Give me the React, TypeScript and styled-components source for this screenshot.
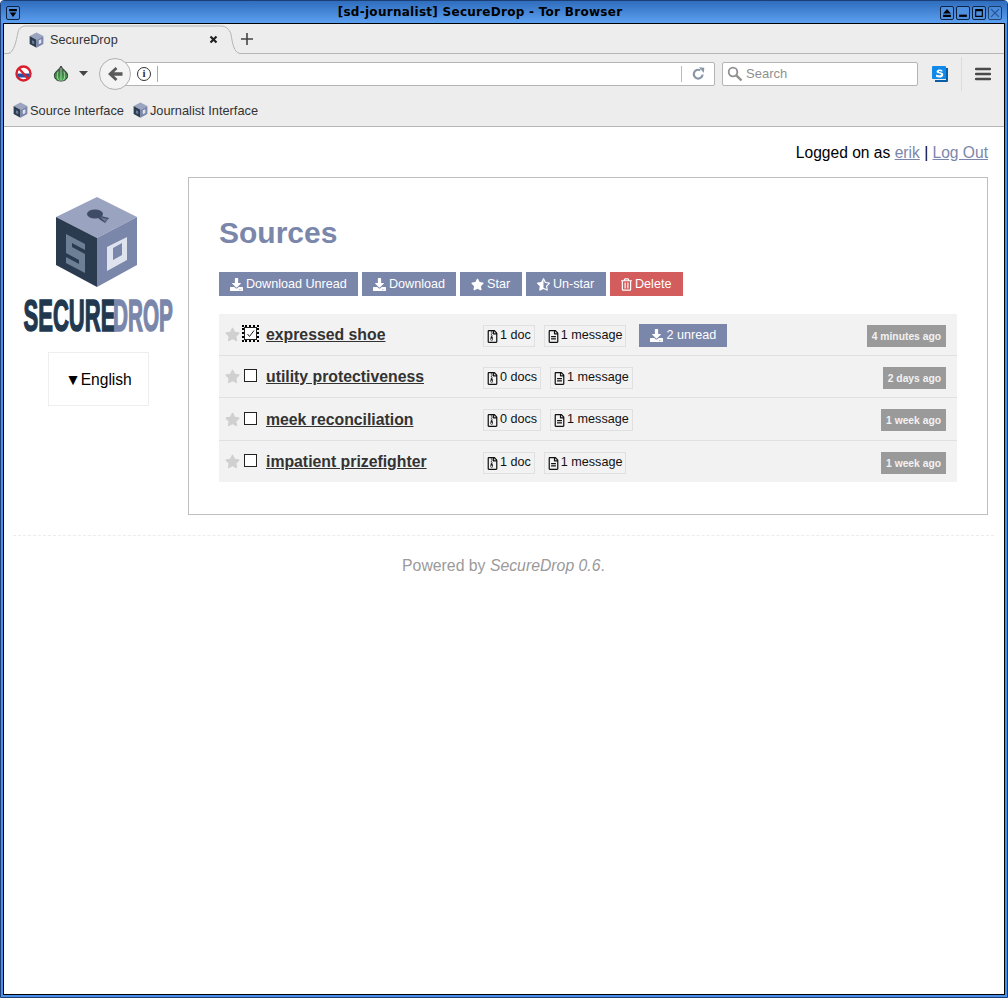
import React from "react";
import styled, { createGlobalStyle } from "styled-components";
import { FaDownload, FaStar, FaRegTrashAlt, FaRegFileArchive, FaRegFileAlt, FaStarHalfAlt } from "react-icons/fa";

const Global = createGlobalStyle`
  html, body { margin: 0; padding: 0; background: #fff; }
  body { font-family: "Liberation Sans", Arial, sans-serif; font-size: 16px; overflow: hidden; }
  * { box-sizing: border-box; }
`;

const Frame = styled.div`
  width: 1008px; height: 998px; display: flex; flex-direction: column;
  background: #4a8fe8; border: 1px solid #1d3f78; border-radius: 4px 4px 0 0; padding: 0 2px 2px;
`;
const TitleBar = styled.div`
  height: 22px; flex: none; display: flex; align-items: flex-start; justify-content: space-between;
  position: relative; padding: 5px 5px 0;
  background: linear-gradient(#2f6dbd, #5c9ff0); margin: 0 -2px;
`;
const TitleText = styled.div`
  position: absolute; left: 0; right: 48px; top: 4px; text-align: center;
  font-family: "DejaVu Sans", sans-serif; font-weight: 700; font-size: 12px; line-height: 14px; letter-spacing: 0.28px; color: #000;
`;
const WinButtons = styled.div`display: flex; gap: 2px;`;
const WinBtn = styled.div<{ $faded?: boolean }>`
  width: 14px; height: 14px; border: 1px solid #10233f; border-radius: 2px; background: #4f8fe0;
  display: flex; align-items: center; justify-content: center; opacity: ${p => (p.$faded ? 0.7 : 1)};
  svg { display: block; }
`;
const Window = styled.div`
  flex: 1; min-height: 0; display: flex; flex-direction: column; border: 1px solid #000; background: #fff;
`;
const TabRow = styled.div`
  height: 30px; flex: none; background: #ededed; border-bottom: 1px solid #b5b5b5; display: flex; align-items: center; position: relative;
`;
const TabShape = styled.svg`position: absolute; left: 0; top: 0; display: block;`;
const Tab = styled.div`
  width: 222px; height: 29px; display: flex; align-items: center; padding: 2px 8px 0 25px; font-size: 12.7px; color: #333; position: relative;
  svg { display: block; flex: none; }
`;
const TabTitle = styled.span`flex: 1; margin: 0 0 0 6px;`;
const NewTab = styled.div`margin: 1px 0 0 14px; display: flex; position: relative; svg { display: block; }`;
const NavRow = styled.div`
  height: 39px; flex: none; background: #ededed; display: flex; align-items: center; padding-left: 11px; position: relative;
`;
const IconSlot = styled.div<{ $w: number; $ml?: number }>`
  width: ${p => p.$w}px; margin-left: ${p => p.$ml ?? 0}px; flex: none; display: flex; align-items: center; svg { display: block; }
`;
const BackBtn = styled.div`
  width: 32px; height: 32px; flex: none; border-radius: 50%; border: 1px solid #b0b0b0; background: #f3f3f3;
  display: flex; align-items: center; justify-content: center; z-index: 1; margin-right: -16px;
`;
const UrlBar = styled.div`
  width: 600px; height: 24px; flex: none; background: #fff; border: 1px solid #b4b4b4; border-radius: 0 2px 2px 0;
  display: flex; align-items: center; padding-left: 21px;
`;
const InfoIcon = styled.div`
  width: 14px; height: 14px; border: 1px solid #333; border-radius: 50%; font-family: "Liberation Serif", serif; font-size: 11px; font-weight: 700;
  color: #333; display: flex; align-items: center; justify-content: center; line-height: 1;
`;
const Caret = styled.div`width: 1px; height: 16px; background: #aaa; margin-left: 6px; flex: none;`;
const UrlSpacer = styled.div`flex: 1;`;
const ReloadWrap = styled.div`
  width: 33px; height: 16px; border-left: 1px solid #bbb; display: flex; align-items: center; justify-content: center; svg { display: block; }
`;
const SearchBar = styled.div`
  width: 196px; height: 24px; flex: none; margin-left: 7px; background: #fff; border: 1px solid #b4b4b4; border-radius: 2px;
  display: flex; align-items: center; padding-left: 4px; gap: 3px; color: #8f8f8f; font-size: 13px;
  svg { display: block; }
`;
const ToolSep = styled.div`width: 1px; height: 34px; background: #dcdcdc; flex: none; margin: 0 13px;`;
const BookmarkRow = styled.div`
  height: 34px; flex: none; background: #ededed; border-bottom: 1px solid #b5b5b5; display: flex; align-items: center; padding: 1px 0 0 9px; gap: 9px; font-size: 12.8px; color: #333;
`;
const Bookmark = styled.div`display: flex; align-items: center; gap: 2px; svg { display: block; }`;

const Page = styled.div`flex: 1; min-height: 0; padding: 16px 16px 0 0; color: #000; line-height: 19px;`;
const UserLine = styled.div`text-align: right; height: 19px; margin-bottom: 15px; font-size: 15.6px;`;
const UserLink = styled.a`color: #7b86ab; text-decoration: underline;`;
const Columns = styled.div`display: flex; align-items: flex-start;`;
const Sidebar = styled.div`
  width: 184px; flex: none; padding: 20px 15px 0 19px; display: flex; flex-direction: column; align-items: center;
`;
const Logo = styled.svg`display: block; flex: none;`;
const LocaleBox = styled.div`
  width: 101px; height: 54px; margin: 10px 0 0 1px; border: 1px solid #eee; display: flex; align-items: center; justify-content: center; font-size: 15.6px;
`;
const Main = styled.div`
  width: 800px; height: 338px; flex: none; border: 1px solid #bfbfbf; padding: 38px 30px 0;
`;
const Heading = styled.h1`
  margin: 0 0 22px; font-size: 30px; line-height: 34px; font-weight: 700; color: #7b86ab;
`;
const Actions = styled.div`display: flex; gap: 4px; margin-bottom: 18px;`;
const ActionBtn = styled.div<{ $danger?: boolean; $w: number }>`
  width: ${p => p.$w}px; height: 24px; padding: 1px 0 0 11px; display: flex; align-items: center; gap: 3px; color: #fff; font-size: 12.6px; white-space: nowrap;
  background: ${p => (p.$danger ? "#d35c5c" : "#7b86ab")};
  svg { display: block; width: ${p => (p.$danger ? 11 : 13)}px; height: 13px; margin-top: -1px; }
`;
const Table = styled.div`width: 738px; background: #f2f2f2;`;
const Row = styled.div<{ $h: number; $nudge: number; $last?: boolean }>`
  height: ${p => p.$h}px; padding: ${p => p.$nudge}px 11px 0 5px; display: flex; align-items: flex-start;
  border-bottom: ${p => (p.$last ? "none" : "1px solid #e0e0e0")};
`;
const StarBox = styled.div`
  width: 17px; height: 17px; margin-top: 12px; flex: none; color: #d0d0d0; display: flex; align-items: center; justify-content: center;
  svg { display: block; width: 15px; height: 15px; }
`;
const Check = styled.div<{ $focus?: boolean }>`
  width: 13px; height: 13px; margin: 13px 0 0 3px; flex: none; border: 1px solid #222; background: #fff; display: flex; align-items: center; justify-content: center;
  outline: ${p => (p.$focus ? "2px dotted #000" : "none")};
  svg { display: block; }
`;
const SourceName = styled.a`
  width: 217px; margin: 11px 0 0 9px; flex: none; font-weight: 700; font-size: 15.8px; line-height: 19px; color: #333; text-decoration: underline; white-space: nowrap;
`;
const Badges = styled.div<{ $nudge: number }>`display: flex; align-items: flex-start; margin-top: ${p => 11 - p.$nudge}px; flex: none;`;
const Badge = styled.div`
  height: 22px; display: flex; align-items: center; gap: 2px; padding: 0 3px 1px; border: 1px solid #e0e0e0; font-size: 12.6px; color: #111; margin-right: 9px;
  svg { display: block; width: 11px; height: 13px; margin-top: 1px; }
`;
const Unread = styled.div`
  height: 23px; margin: 10px 0 0 4px; padding: 0 11px; display: flex; align-items: center; gap: 3px; background: #7b86ab; color: #fff; font-size: 12.6px;
  svg { display: block; width: 13px; height: 13px; }
`;
const Time = styled.div<{ $nudge: number }>`
  margin: ${p => 11 - p.$nudge}px 0 0 auto; height: 22px; padding: 0 5px; display: flex; align-items: center; background: #9a9a9a; color: #f2f2f2; font-size: 10.3px; font-weight: 700;
`;
const Footer = styled.div`
  margin: 20px 0 0 9px; width: 981px; border-top: 1px dashed #ececec; padding-top: 20px; text-align: center; color: #9a9a9a; font-size: 15.8px;
`;

const Cube = () => (
  <svg width={15} height={16} viewBox="0.5 0 13 14">
    <path d="M7 0.500 13 3.500 7 6.700 1 3.500Z" fill="#9aa3c0" />
    <path d="M1 3.500 7 6.700V13.700L1 10.600Z" fill="#2b3c52" />
    <path d="M13 3.500 7 6.700V13.700L13 10.600Z" fill="#7b86ab" />
    <path d="M9 7.300 11.200 6.300V9.700L9 10.800Z" fill="#dfe3ee" />
    <path d="M3 7.200 5 8.200V10.800L3 9.800Z" fill="#6d7f95" />
  </svg>
);

const NoScript = () => (
  <svg width="17" height="17" viewBox="0 0 17 17">
    <circle cx="8.500" cy="8.500" r="7" fill="#fff" stroke="#d8202c" strokeWidth="2.400" />
    <path d="M2.500 8.500h12c0 1.500-.5 3-1.500 4H4c-1-1-1.500-2.500-1.500-4Z" fill="#2a4fa8" />
    <path d="M4 3.500 13 13.500" stroke="#d8202c" strokeWidth="2.200" />
  </svg>
);

const Onion = () => (
  <svg width="16" height="17" viewBox="0 0 17 18">
    <defs>
      <linearGradient id="onionFill" x1="0" y1="0" x2="0" y2="1">
        <stop offset="0" stopColor="#4a4f48" />
        <stop offset="0.45" stopColor="#3a7a42" />
        <stop offset="1" stopColor="#45b04e" />
      </linearGradient>
    </defs>
    <path d="M8.500 1C9 4 15.500 6.500 15.500 11S12 17 8.500 17 1.500 15.500 1.500 11 8 4 8.500 1Z" fill="url(#onionFill)" stroke="#2c2c2c" strokeWidth="1" />
    <path d="M8.500 3V17M5.500 7C3.800 11 4.500 15 7 17M11.500 7C13.200 11 12.500 15 10 17" fill="none" stroke="#cfe8c8" strokeWidth="0.800" />
  </svg>
);

const BackArrow = () => (
  <svg width="16" height="16" viewBox="0 0 16 16">
    <path d="M8.500 1 1 8l7.500 7 2-2-3.500-3.300H15.500V6.300H7L10.500 3Z" fill="#5a5a5a" />
  </svg>
);

const Reload = () => (
  <svg width="13" height="14" viewBox="0 0 13 14">
    <path d="M10.600 7.500A4.400 4.400 0 1 1 8.300 3.300" fill="none" stroke="#8a97a8" strokeWidth="2.200" />
    <path d="M7 0.300 12.300 0.800 11.800 6 Z" fill="#8a97a8" />
  </svg>
);

const SearchGlass = () => (
  <svg width="16" height="16" viewBox="0 0 16 16">
    <circle cx="6" cy="6" r="4.300" fill="none" stroke="#8f8f8f" strokeWidth="1.800" />
    <path d="M9.300 9.300 14.500 14.500" stroke="#8f8f8f" strokeWidth="2.400" />
  </svg>
);

const SBox = () => (
  <svg width="16" height="16" viewBox="0 0 16 16">
    <path d="M0 1a1 1 0 0 1 1-1h12a1 1 0 0 1 1 1v12H1a1 1 0 0 1-1-1Z" fill="#1089e8" />
    <path d="M14 2h2v13a1 1 0 0 1-1 1H3v-2h11Z" fill="#0a5ea8" />
    <path d="M10.300 4.200C9 3.300 5 3 4.600 5.500 4.300 8 9 7 9 8.500 9 9.800 6 9.500 4.200 8.500L4 10.800C6.500 12 11 12 11.300 8.700 11.500 6 7 6.800 7 5.500 7 4.700 9 5 10.300 6Z" fill="#fff" />
  </svg>
);

const Burger = () => (
  <svg width="16" height="14" viewBox="0 0 16 14">
    <path d="M1 2h14M1 7h14M1 12h14" stroke="#4a4a4a" strokeWidth="2.400" strokeLinecap="round" />
  </svg>
);

const Logomark = () => (
  <Logo width={150} height={145} viewBox="0 0 150 145">
    <path d="M74 0 114 20 74 41 33 20Z" fill="#9aa3c0" />
    <path d="M33 20 74 41V90L33 68Z" fill="#2a3b50" />
    <path d="M114 20 74 41V90L114 68Z" fill="#7b86ab" />
    <ellipse cx="72" cy="17" rx="8" ry="4.500" fill="#3e4c66" />
    <path d="M74 18 86 21 82 26 76 22Z" fill="#3e4c66" />
    <path d="M77 20 85 22 82 25Z" fill="#68738f" />
    <path d="M43 37 62 47V53L49 46V50L62 57V76L43 66V60L56 67V63L43 56Z" fill="#6d7f95" />
    <path fillRule="evenodd" d="M84 50 104 40V63L84 74ZM90 51V63L99 58V46Z" fill="#dfe3ee" />
    <text transform="translate(0.500 134) scale(0.49 1)" fontFamily="'Liberation Sans', sans-serif" fontWeight="700" fontSize="45" fill="#22384f" stroke="#22384f" strokeWidth="1.600">SECURE</text>
    <text transform="translate(90 134) scale(0.46 1)" fontFamily="'Liberation Sans', sans-serif" fontWeight="700" fontSize="45" fill="#7b86ab" stroke="#7b86ab" strokeWidth="1.600">DROP</text>
  </Logo>
);

const sources = [
  { name: "expressed shoe", docs: "1 doc", msgs: "1 message", unread: "2 unread", time: "4 minutes ago", checked: true, h: 42, nudge: 0 },
  { name: "utility protectiveness", docs: "0 docs", msgs: "1 message", time: "2 days ago", h: 42, nudge: 0 },
  { name: "meek reconciliation", docs: "0 docs", msgs: "1 message", time: "1 week ago", h: 43, nudge: 1 },
  { name: "impatient prizefighter", docs: "1 doc", msgs: "1 message", time: "1 week ago", h: 41, nudge: 0 },
];

export default function App() {
  return (
    <>
      <Global />
      <Frame>
        <TitleBar>
          <WinBtn>
            <svg width="10" height="10" viewBox="0 0 9 9"><path d="M1 1h7v2H1ZM1.500 4h6L4.500 8Z" fill="#000" /></svg>
          </WinBtn>
          <TitleText>[sd-journalist] SecureDrop - Tor Browser</TitleText>
          <WinButtons>
            <WinBtn><svg width="10" height="10" viewBox="0 0 9 9"><path d="M4.500 1 8 5H1ZM1 6h7v2H1Z" fill="#000" /></svg></WinBtn>
            <WinBtn><svg width="10" height="10" viewBox="0 0 9 9"><path d="M1 6h7v2H1Z" fill="#000" /></svg></WinBtn>
            <WinBtn><svg width="10" height="10" viewBox="0 0 9 9"><path d="M1 1h7v7H1ZM2 3v4h5V3Z" fill="#000" fillRule="evenodd" /></svg></WinBtn>
            <WinBtn $faded><svg width="10" height="10" viewBox="0 0 9 9"><path d="M1 1 8 8M8 1 1 8" stroke="#1d3f78" strokeWidth="1.200" /></svg></WinBtn>
          </WinButtons>
        </TitleBar>
        <Window>
          <TabRow>
            <TabShape width="240" height="30" viewBox="0 0 240 30">
              <path d="M0 29.500H6C11 27.500 12 18 14 8C15 4 18 2 22 2H217C222 2 225 5 227 10C228.500 20 230 28 236 29.500V30H0Z" fill="#ededed" />
              <path d="M0 29.500H4C10 28.500 12 18 14 8C15 4 18 2 22 2H217C222 2 225 5 227 10C228.500 20 230 28.500 236 29.500H240" fill="none" stroke="#b5b5b5" strokeWidth="1" />
            </TabShape>
            <Tab>
              <Cube />
              <TabTitle>SecureDrop</TabTitle>
              <svg width="9" height="9" viewBox="0 0 9 9"><path d="M1.500 1.500 7.500 7.500M7.500 1.500 1.500 7.500" stroke="#222" strokeWidth="2.200" /></svg>
            </Tab>
            <NewTab>
              <svg width="14" height="14" viewBox="0 0 14 14"><path d="M7 1V13M1 7H13" stroke="#444" strokeWidth="1.600" /></svg>
            </NewTab>
          </TabRow>
          <NavRow>
            <IconSlot $w={38}><NoScript /></IconSlot>
            <IconSlot $w={26}><Onion /></IconSlot>
            <IconSlot $w={20}>
              <svg width="9" height="5" viewBox="0 0 9 5"><path d="M0 0h9L4.500 5Z" fill="#444" /></svg>
            </IconSlot>
            <BackBtn><BackArrow /></BackBtn>
            <UrlBar>
              <InfoIcon>i</InfoIcon>
              <Caret />
              <UrlSpacer />
              <ReloadWrap><Reload /></ReloadWrap>
            </UrlBar>
            <SearchBar><SearchGlass />Search</SearchBar>
            <IconSlot $w={16} $ml={14}><SBox /></IconSlot>
            <ToolSep />
            <IconSlot $w={16}><Burger /></IconSlot>
          </NavRow>
          <BookmarkRow>
            <Bookmark><Cube />Source Interface</Bookmark>
            <Bookmark><Cube />Journalist Interface</Bookmark>
          </BookmarkRow>
          <Page>
            <UserLine>Logged on as <UserLink>erik</UserLink> | <UserLink>Log Out</UserLink></UserLine>
            <Columns>
              <Sidebar>
                <Logomark />
                <LocaleBox>▼English</LocaleBox>
              </Sidebar>
              <Main>
                <Heading>Sources</Heading>
                <Actions>
                  <ActionBtn $w={139}><FaDownload />Download Unread</ActionBtn>
                  <ActionBtn $w={94}><FaDownload />Download</ActionBtn>
                  <ActionBtn $w={62}><FaStar />Star</ActionBtn>
                  <ActionBtn $w={80}><FaStarHalfAlt />Un-star</ActionBtn>
                  <ActionBtn $danger $w={73}><FaRegTrashAlt />Delete</ActionBtn>
                </Actions>
                <Table>
                  {sources.map((s, i) => (
                    <Row key={s.name} $h={s.h} $nudge={s.nudge} $last={i === sources.length - 1}>
                      <StarBox><FaStar /></StarBox>
                      <Check $focus={s.checked}>
                        {s.checked && <svg width="9" height="9" viewBox="0 0 9 9"><path d="M1.500 5 3.500 7.500 8 1.500" fill="none" stroke="#222" strokeWidth="1" /></svg>}
                      </Check>
                      <SourceName>{s.name}</SourceName>
                      <Badges $nudge={s.nudge}>
                        <Badge><FaRegFileArchive />{s.docs}</Badge>
                        <Badge><FaRegFileAlt />{s.msgs}</Badge>
                      </Badges>
                      {s.unread && <Unread><FaDownload />{s.unread}</Unread>}
                      <Time $nudge={s.nudge}>{s.time}</Time>
                    </Row>
                  ))}
                </Table>
              </Main>
            </Columns>
            <Footer>Powered by <em>SecureDrop 0.6</em>.</Footer>
          </Page>
        </Window>
      </Frame>
    </>
  );
}
